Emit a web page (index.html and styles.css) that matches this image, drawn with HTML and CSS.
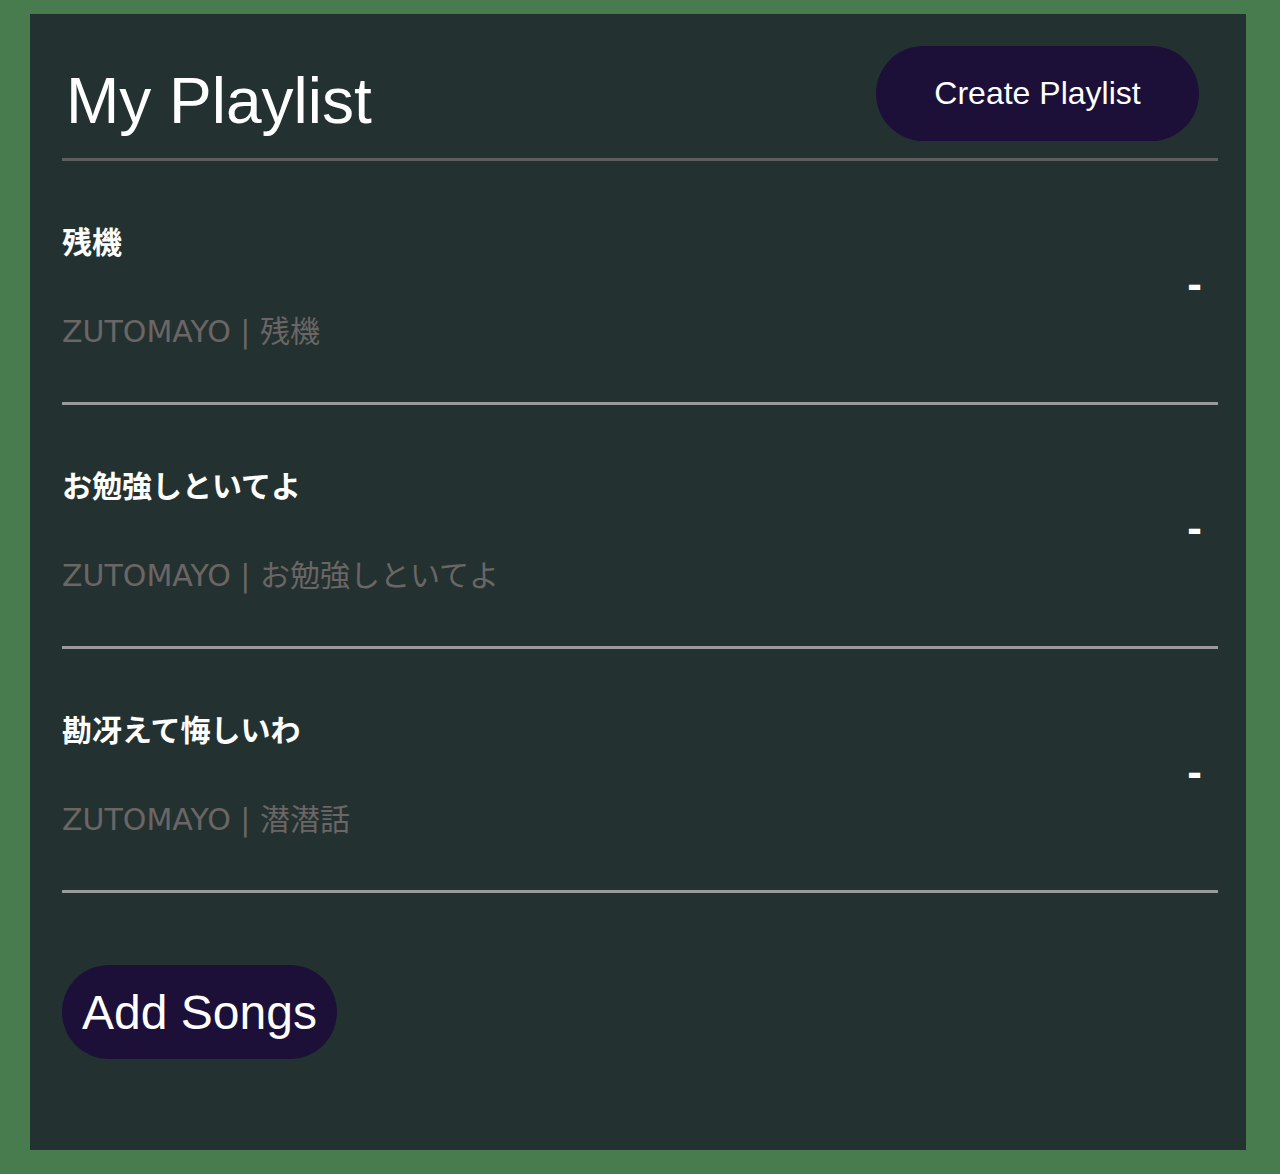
FILE: index.html
```html
<!DOCTYPE html>
<html lang="ja">
<head>
<meta charset="utf-8">
<title>My Playlist</title>
<link rel="stylesheet" href="styles.css">
</head>
<body>
<main class="card">
  <header class="header">
    <h1 class="title">My Playlist</h1>
    <button class="pill create">Create Playlist</button>
  </header>
  <ul class="songs">
    <li class="song">
      <div class="info">
        <h3 class="song-title">残機</h3>
        <p class="song-sub">ZUTOMAYO | 残機</p>
      </div>
      <span class="remove">-</span>
    </li>
    <li class="song">
      <div class="info">
        <h3 class="song-title">お勉強しといてよ</h3>
        <p class="song-sub">ZUTOMAYO | お勉強しといてよ</p>
      </div>
      <span class="remove">-</span>
    </li>
    <li class="song">
      <div class="info">
        <h3 class="song-title">勘冴えて悔しいわ</h3>
        <p class="song-sub">ZUTOMAYO | 潜潜話</p>
      </div>
      <span class="remove">-</span>
    </li>
  </ul>
  <div class="footer">
    <button class="pill add">Add Songs</button>
  </div>
</main>
</body>
</html>
```
FILE: styles.css
```css
html, body {
  margin: 0;
  padding: 0;
}
body {
  background: #487b4e;
  padding: 14px 34px 24px 30px;
  font-family: "Liberation Sans", Arial, sans-serif;
  color: #fff;
}
.card {
  background: #233230;
  padding: 0 28px 91px 32px;
}
.header {
  display: flex;
  justify-content: space-between;
  align-items: flex-start;
  padding-top: 32px;
  padding-bottom: 17px;
  border-bottom: 3px solid #5e5e5e;
}
.title {
  margin: 20px 0 0 4px;
  font-size: 64px;
  font-weight: normal;
  line-height: 1.117;
}
.pill {
  border: none;
  background: #1c1039;
  color: #fff;
  font-family: "Liberation Sans", Arial, sans-serif;
  border-radius: 999px;
  cursor: pointer;
}
.create {
  width: 323px;
  height: 95px;
  margin-right: 19px;
  font-size: 32px;
  padding: 0;
}
.songs {
  list-style: none;
  margin: 0;
  padding: 0;
}
.song {
  display: flex;
  justify-content: space-between;
  align-items: center;
  padding: 58px 16px 49px 0;
  border-bottom: 3px solid #9a9a9a;
}
.info {
  display: flex;
  flex-direction: column;
}
.song-title {
  margin: 0;
  font-family: "Noto Sans CJK JP", sans-serif;
  font-size: 30px;
  font-weight: bold;
  line-height: 42px;
}
.song-sub {
  margin: 50px 0 0 0;
  font-family: "DejaVu Sans", "Noto Sans CJK JP", sans-serif;
  font-size: 30px;
  line-height: 42px;
  color: #6b6565;
}
.remove {
  font-family: "Liberation Sans", Arial, sans-serif;
  font-weight: bold;
  font-size: 44px;
  line-height: 1;
  margin-bottom: 4px;
  color: #fff;
}
.footer {
  padding-top: 72px;
}
.add {
  width: 275px;
  height: 94px;
  font-size: 48px;
  padding: 0;
}
```
